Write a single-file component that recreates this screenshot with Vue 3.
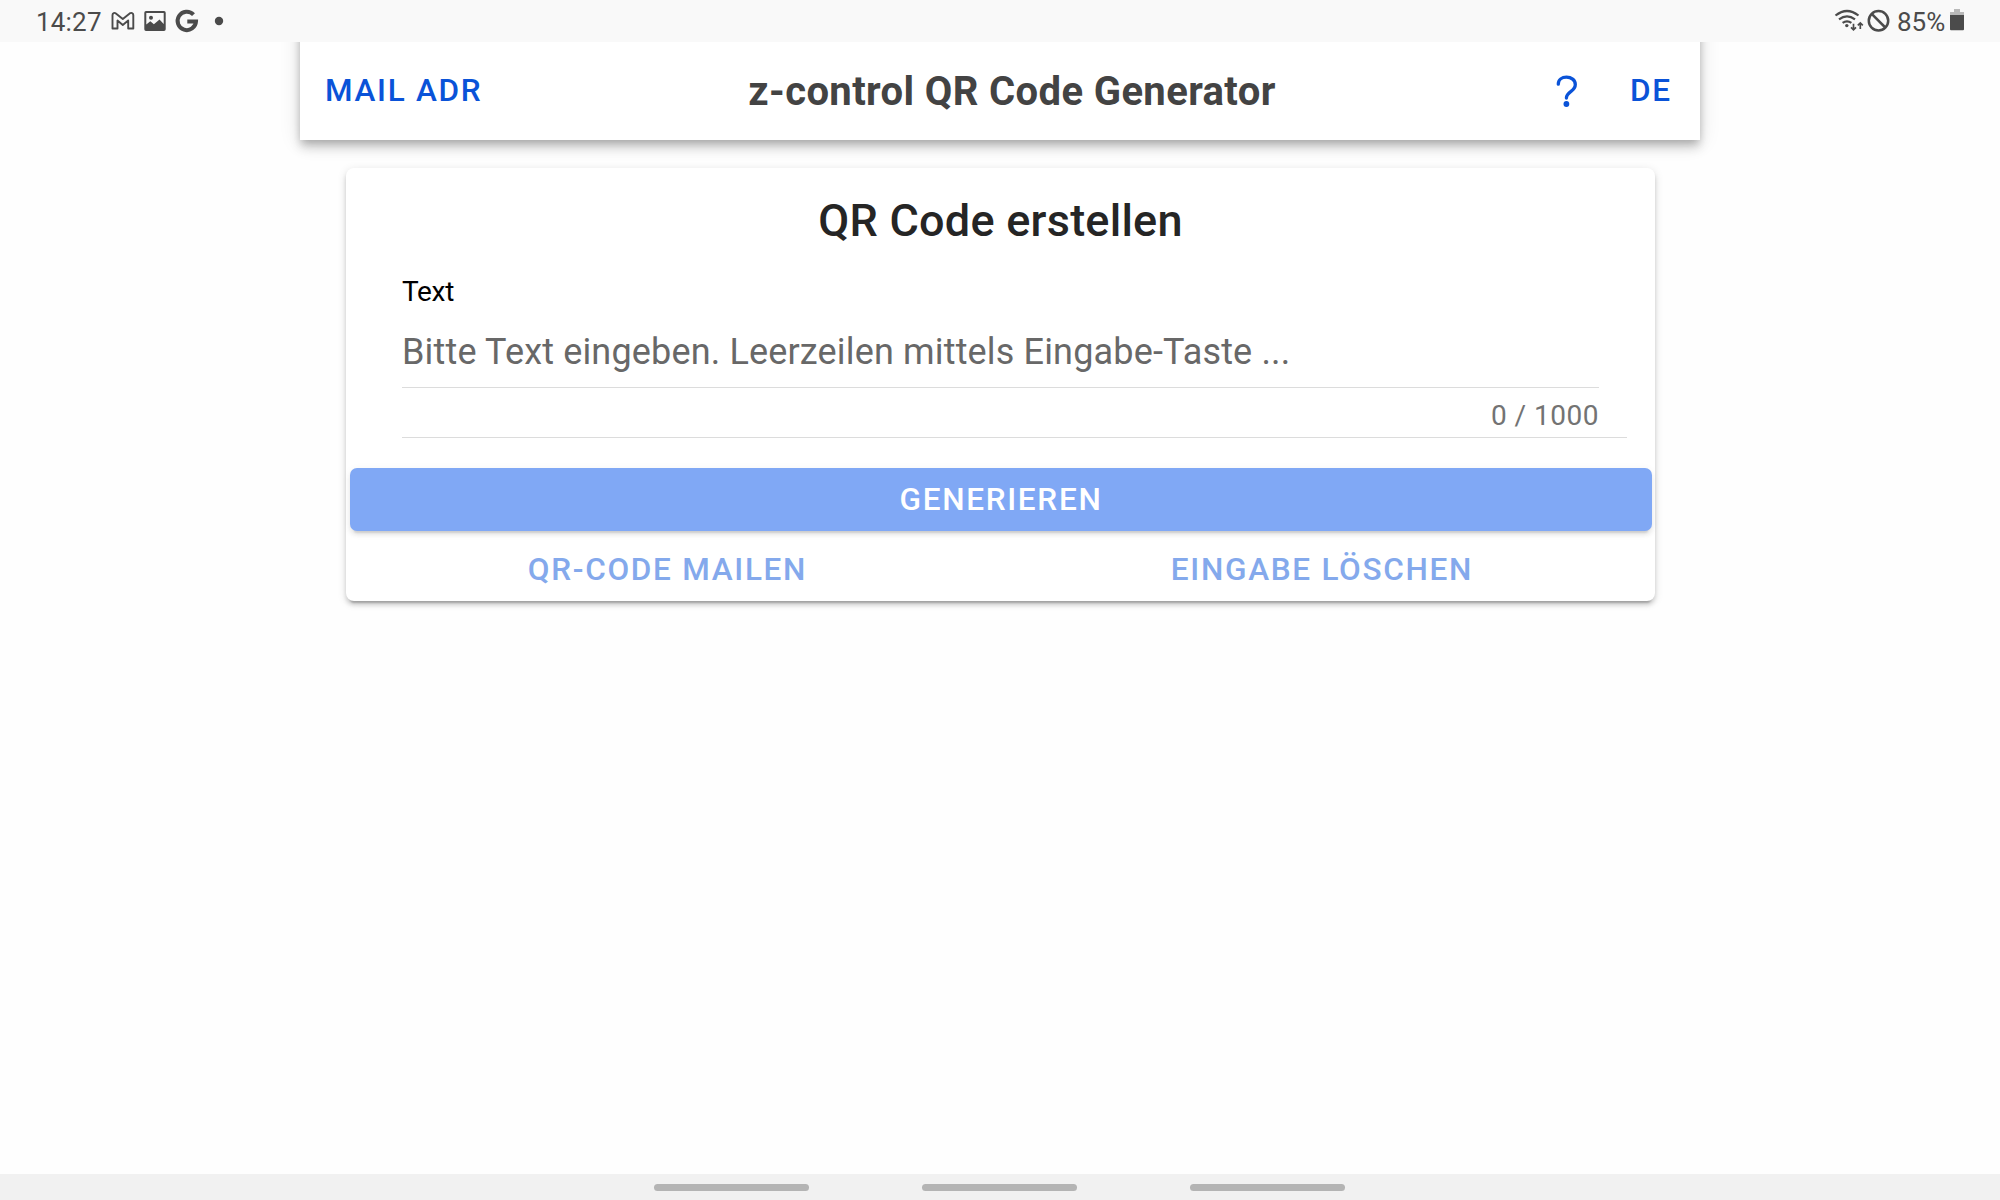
<script setup>
const pills = [0, 1, 2]
</script>

<template>
  <div class="screen">
    <div class="status">
      <span class="clock">14:27</span>
      <svg class="notes" width="120" height="42" viewBox="106 0 120 42">
        <path d="M112.500 28.500V15c0-2 2-2.600 3.400-1.600l6.900 5.600 6.900-5.600c1.500-1 3.600-.4 3.600 1.600v13.500h-5.100V20.500l-5.400 4.400-5.300-4.400v8z" fill="none" stroke="#4b4b4b" stroke-width="1.900" stroke-linejoin="round" />
        <path d="M146 11h18a1.700 1.700 0 0 1 1.700 1.700v16.600a1.700 1.700 0 0 1-1.700 1.700h-18a1.700 1.700 0 0 1-1.700-1.700V12.700A1.700 1.700 0 0 1 146 11zM146.300 13v11.500l4-3.300 3.600 3 5.600-4.700 4.200 4.500V13z" fill="#4b4b4b" fill-rule="evenodd" />
        <circle cx="151" cy="17.700" r="2" fill="#4b4b4b" />
        <path d="M193.500 14.600A9.200 9.200 0 1 0 196 21.400h-8.700" fill="none" stroke="#4b4b4b" stroke-width="4" />
        <circle cx="219" cy="21" r="4.200" fill="#4b4b4b" />
      </svg>
      <span class="grow"></span>
      <svg class="signals" width="58" height="42" viewBox="1834 0 58 42">
        <g fill="none" stroke="#4b4b4b" stroke-width="2.200">
          <path d="M1835.500 15.500q11.500-9 23 0" />
          <path d="M1839 19.300q8-6 16 0" />
          <path d="M1842.600 22.800q4.400-3 8.800 0" />
          <path d="M1853.500 23.700v6M1851 27.300l2.500 2.500 2.500-2.500M1860.300 29v-6M1857.800 25.400l2.500-2.500 2.500 2.500" stroke-width="1.700" />
          <circle cx="1878.500" cy="20.700" r="9.700" stroke-width="2.500" />
          <path d="M1871.700 13.900l13.600 13.600" stroke-width="2.500" />
        </g>
        <circle cx="1846.800" cy="25.600" r="1.700" fill="#4b4b4b" />
      </svg>
      <span class="percent">85%</span>
      <svg class="battery" width="14" height="42" viewBox="1950 0 14 42">
        <path d="M1954 9h6v3h4v4h-14v-4h4z" fill="#b9b9b9" />
        <path d="M1950 15h14v14.300a1 1 0 0 1-1 1h-12a1 1 0 0 1-1-1z" fill="#4b4b4b" />
      </svg>
    </div>

    <main class="page">
      <header class="toolbar">
        <button class="link">MAIL ADR</button>
        <h1>z-control QR Code Generator</h1>
        <svg class="help" width="24" height="34" viewBox="0 0 24 34">
          <path d="M3.300 10.200C3.300 5.600 7 3.200 11.500 3.200c4.700 0 8.800 2.700 8.800 7.200 0 3.200-1.700 5-4.300 6.900-2.800 2-4.600 3.500-4.600 6.700" fill="none" stroke="#0a53d8" stroke-width="3.300" stroke-linecap="round" />
          <circle cx="11.400" cy="30" r="2.900" fill="#0a53d8" />
        </svg>
        <button class="link lang">DE</button>
      </header>

      <section class="card">
        <h2>QR Code erstellen</h2>
        <div class="field">
          <label>Text</label>
          <div class="placeholder">Bitte Text eingeben. Leerzeilen mittels Eingabe-Taste ...</div>
          <div class="counter">0 / 1000</div>
        </div>
        <button class="generate">GENERIEREN</button>
        <div class="actions">
          <button>QR-CODE MAILEN</button>
          <button>EINGABE LÖSCHEN</button>
        </div>
      </section>
    </main>

    <nav class="navbar"><i v-for="p in pills" :key="p"></i></nav>
  </div>
</template>

<style>
body { margin: 0; background: #fefefe; }
</style>

<style scoped>
.screen {
  display: flex;
  flex-direction: column;
  width: 2000px;
  height: 1200px;
  overflow: hidden;
  background: #fefefe;
  font-family: Roboto, "Liberation Sans", sans-serif;
}
button { border: 0; padding: 0; background: none; font: 500 31.5px/40px Roboto, sans-serif; letter-spacing: 1.7px; }
.status {
  flex: none;
  display: flex;
  height: 42px;
  background: #f9f9f9;
  color: #4b4b4b;
  font-size: 26px;
  line-height: 44px;
}
.clock { width: 70px; margin-left: 36px; letter-spacing: .2px; }
.grow { flex: 1; }
.signals { margin-right: 5px; }
.percent { width: 53px; }
.battery { margin-right: 36px; }
.page { flex: 1; overflow: hidden; }
/* The toolbar reaches up behind the status bar so its side shadows start at full strength. */
.toolbar {
  display: flex;
  align-items: center;
  box-sizing: border-box;
  width: 1400px;
  height: 128px;
  margin: -30px auto 0;
  padding: 30px 0 0 25px;
  background: #fff;
  box-shadow: 0 4px 8px -2px rgba(0,0,0,.2), 0 8px 10px 0 rgba(0,0,0,.14), 0 2px 20px 0 rgba(0,0,0,.12);
}
.link { width: 160px; text-align: left; color: #0a53d8; }
h1 { flex: none; width: 780px; margin: 2px 0 0 137px; text-align: center; font: 700 40px/48px Roboto, sans-serif; letter-spacing: .38px; color: #434343; }
.help { margin-left: 153px; }
.lang { width: 50px; margin-left: 51px; }
.card {
  box-sizing: border-box;
  width: 1309px;
  height: 433px;
  margin: 28px 0 0 346px;
  border-radius: 8px;
  background: #fff;
  box-shadow: 0 6px 2px -4px rgba(0,0,0,.2), 0 4px 4px 0 rgba(0,0,0,.14), 0 2px 10px 0 rgba(0,0,0,.12);
}
h2 { margin: 0; padding: 23px 0 1px; text-align: center; font: 500 45px/60px Roboto, sans-serif; letter-spacing: .24px; color: #252525; }
.field { height: 185px; width: 1225px; margin-left: 56px; border-bottom: 1px solid #dcdcdc; }
label { display: block; padding-top: 22px; font-size: 28px; line-height: 36px; letter-spacing: -.3px; color: #000; }
.placeholder { width: 1197px; height: 59px; margin-top: 18px; border-bottom: 1px solid #dcdcdc; font-size: 36px; line-height: 48px; letter-spacing: .16px; color: #686868; }
.counter { width: 1197px; text-align: right; font-size: 28px; line-height: 56px; letter-spacing: .5px; color: #737373; }
.generate {
  display: block;
  width: 1302px;
  height: 63px;
  margin: 30px 0 0 4px;
  border-radius: 7px;
  background: #80a8f5;
  color: #fff;
  box-shadow: 0 6px 2px -4px rgba(0,0,0,.1), 0 4px 4px 0 rgba(0,0,0,.07), 0 2px 10px 0 rgba(0,0,0,.06);
}
.actions { display: flex; height: 70px; }
.actions button { width: 643px; color: #84a9ec; padding-top: 7px; }
.actions button + button { width: 666px; }
.navbar {
  flex: none;
  display: flex;
  justify-content: center;
  gap: 113px;
  height: 16px;
  padding: 10px 2px 0 0;
  background: #f1f1f1;
}
.navbar i { width: 155px; height: 7px; border-radius: 3.500px; background: #b4b4b4; }
</style>
